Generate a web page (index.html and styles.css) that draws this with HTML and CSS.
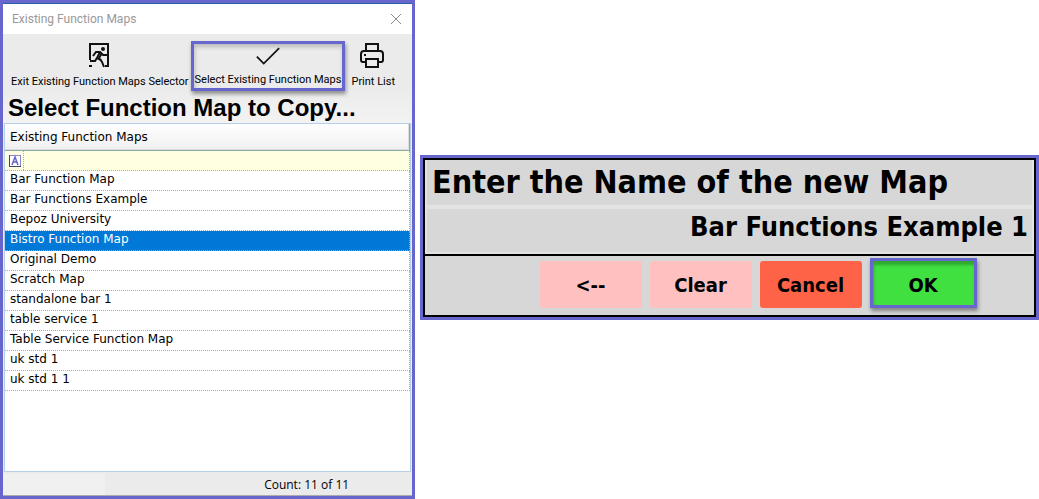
FILE: index.html
```html
<!DOCTYPE html>
<html lang="en">
<head>
    <meta charset="UTF-8">
    <meta name="viewport" content="width=device-width, initial-scale=1.0">
    <title>Existing Function Maps</title>
    <link rel="stylesheet" href="styles.css">
</head>
<body>
    <!-- Map Selector Window -->
    <section class="selector">
        <header class="title-bar">
            <span>Existing Function Maps</span>
            <button class="close-btn" type="button" aria-label="Close">
                <svg width="12" height="12" viewBox="0 0 12 12"><path d="M1 1L11 11M11 1L1 11" stroke="#8a8a8a" fill="none"/></svg>
            </button>
        </header>

        <div class="top-area">
            <div class="toolbar">
                <button class="tool-btn" type="button">
                    <svg width="28" height="28" viewBox="0 0 28 28" fill="none" stroke="#111" stroke-width="2">
                        <path d="M4 19V3H22V25H19"/>
                        <path d="M3 25H6"/>
                        <circle cx="17" cy="8" r="2" fill="#111" stroke="none"/>
                        <path d="M7 15L10 11H14L17 14H21"/>
                        <path d="M14 11L11 17L15 19"/>
                        <path d="M16 12L13 17"/>
                        <path d="M14 18L16 21L18 26"/>
                        <path d="M11 17L9 20H4"/>
                    </svg>
                    <span>Exit Existing Function Maps Selector</span>
                </button>
                <button class="tool-btn marked" type="button">
                    <svg width="28" height="28" viewBox="0 0 28 28" fill="none" stroke="#111" stroke-width="2">
                        <path d="M1 16L9 24L27 6"/>
                    </svg>
                    <span>Select Existing Function Maps</span>
                </button>
                <button class="tool-btn" type="button">
                    <svg width="28" height="28" viewBox="0 0 28 28" fill="none" stroke="#111" stroke-width="2">
                        <path d="M7 10V3H19V10"/>
                        <path d="M6 21H4Q2 21 2 19V13Q2 10 5 10H21Q24 10 24 13V19Q24 21 22 21H20"/>
                        <path d="M7 18H19V26H7Z"/>
                        <path d="M5 14H7"/>
                    </svg>
                    <span>Print List</span>
                </button>
            </div>
            <h1>Select Function Map to Copy...</h1>
        </div>

        <div class="list-area">
            <table class="map-table">
                <thead>
                    <tr><th scope="col">Existing Function Maps</th></tr>
                </thead>
                <tbody>
                    <tr class="filter-row">
                        <td>
                            <div class="filter">
                                <label for="filter">
                                    <svg width="12" height="12" viewBox="0 0 12 12" fill="none">
                                        <rect x="0.5" y="0.5" width="11" height="11" fill="#fff" stroke="#8888cc"/>
                                        <path d="M0.5 0V11.5H12" stroke="#444477"/>
                                        <path d="M3 10L6 2L9 10M4 7H8" stroke="#6666cc" stroke-width="1.5"/>
                                    </svg>
                                </label>
                                <input type="text" id="filter" aria-label="Filter maps">
                            </div>
                        </td>
                    </tr>
                    <tr><td>Bar Function Map</td></tr>
                    <tr><td>Bar Functions Example</td></tr>
                    <tr><td>Bepoz University</td></tr>
                    <tr class="selected"><td>Bistro Function Map</td></tr>
                    <tr><td>Original Demo</td></tr>
                    <tr><td>Scratch Map</td></tr>
                    <tr><td>standalone bar 1</td></tr>
                    <tr><td>table service 1</td></tr>
                    <tr><td>Table Service Function Map</td></tr>
                    <tr><td>uk std 1</td></tr>
                    <tr><td>uk std 1 1</td></tr>
                </tbody>
            </table>
        </div>

        <footer class="status-bar">
            <div class="status-block"></div>
            <div class="count">Count: 11 of 11</div>
        </footer>
    </section>

    <!-- Name Entry Dialog -->
    <form class="dialog">
        <div class="entry">
            <label for="mapName">Enter the Name of the new Map</label>
            <input type="text" id="mapName" value="Bar Functions Example 1">
        </div>
        <div class="actions">
            <button class="btn" type="button">&lt;--</button>
            <button class="btn" type="reset">Clear</button>
            <button class="btn cancel" type="button">Cancel</button>
            <button class="btn ok" type="button">OK</button>
        </div>
    </form>
</body>
</html>
```
FILE: styles.css
```css
/* General Reset */
* {
    box-sizing: border-box;
    margin: 0;
    padding: 0;
}
body {
    display: grid;
    grid-template-columns: minmax(0, 415fr) minmax(0, 619fr);
    gap: 5px;
    min-height: 100vh;
    background: #fff;
    color: #000;
    font-family: "DejaVu Sans", sans-serif;
}
button {
    border: none;
    background: none;
    color: inherit;
    cursor: pointer;
}
svg {
    display: block;
}

/* Selector Window */
.selector {
    display: flex;
    flex-direction: column;
    border: 3px solid #6666cc;
    background: #ebebeb;
}
.title-bar {
    display: flex;
    justify-content: space-between;
    align-items: center;
    height: 31px;
    padding: 0 10px 0 9px;
    border-top: 1px solid #2a5fa5;
    background: #fff;
    color: #999;
    font: 12px Roboto, sans-serif;
}
.top-area {
    height: 89px;
    padding: 7px 4px 0 5px;
    background: linear-gradient(#ebebeb 60%, #f3f3f3);
}
.toolbar {
    display: flex;
}
.tool-btn {
    display: flex;
    flex-direction: column;
    align-items: center;
    height: 50px;
    padding: 0 2px 0 3px;
    font: 11px/16px Roboto, sans-serif;
    white-space: nowrap;
}
.tool-btn span {
    margin-top: 5px;
}
.tool-btn.marked {
    padding: 0 1px;
    border: 3px solid #6666cc;
    box-shadow: 1px 3px 4px rgba(0, 0, 0, 0.4), inset 1px 3px 4px rgba(0, 0, 0, 0.2);
}
.tool-btn.marked svg {
    margin-top: -1px;
}
.tool-btn:last-child {
    padding: 0 6px;
}
h1 {
    font: bold 24px/34px "Liberation Sans", sans-serif;
    white-space: nowrap;
}

/* Map List */
.list-area {
    flex: 1;
    margin: 0 1px;
    border: 1px solid #b5cfe7;
    background: #fff;
}
.map-table {
    width: 100%;
    border-collapse: separate;
    border-spacing: 0;
    font-size: 12px;
    line-height: 16px;
}
.map-table th {
    height: 27px;
    padding: 0 5px;
    border-right: 1px solid #88aaaa;
    border-bottom: 1px solid #88aaaa;
    background: linear-gradient(#fff, #f0f0f0);
    box-shadow: inset -1px -1px #ddd;
    font-weight: normal;
    text-align: left;
}
.map-table td {
    height: 20px;
    padding: 0 5px 3px;
    border-right: 1px dotted #aaa;
    border-bottom: 1px dotted #aaa;
}
.map-table .filter-row td {
    padding: 0;
    background: #ffffe1;
}
.map-table .selected td {
    background: #0078d7;
    color: #fff;
}
.filter {
    display: flex;
    height: 19px;
}
.filter label {
    display: flex;
    align-items: center;
    padding: 0 2px 0 4px;
    border-right: 1px dotted #aaa;
}
.filter input {
    flex: 1;
    min-width: 0;
    border: none;
    outline: none;
    background: transparent;
}

/* Status Bar */
.status-bar {
    display: grid;
    grid-template-columns: 1fr 3fr;
    grid-template-rows: 100%;
    height: 24px;
    border-bottom: 1px solid #aaa;
    font: 12px/26px "Open Sans", sans-serif;
}
.status-block {
    margin-top: 2px;
    background: #f0f0f0;
}
.count {
    padding-left: 96px;
    text-align: center;
}

/* Name Entry Dialog */
.dialog {
    align-self: start;
    margin-top: 155px;
    border: 3px solid #6666cc;
    outline: 2px solid #000;
    outline-offset: -5px;
    padding: 2px;
    background: #d7d7d7;
    font-family: "DejaVu Sans Condensed", "DejaVu Sans", sans-serif;
    font-weight: bold;
}
.entry {
    display: flex;
    flex-direction: column;
    gap: 4px;
    padding: 0 2px 2px;
    border-bottom: 2px solid #000;
    background: #e3e3e3;
}
.entry label {
    height: 45px;
    padding: 0 5px;
    background: #d7d7d7;
    font-size: 32px;
    line-height: 45px;
}
.entry input {
    width: 100%;
    height: 43px;
    padding: 0 4px 8px;
    border: none;
    outline: none;
    background: #d7d7d7;
    font: inherit;
    font-size: 27px;
    text-align: right;
}
.actions {
    display: flex;
    justify-content: center;
    align-items: flex-end;
    gap: 8px;
    height: 59px;
    padding: 0 0 7px 57px;
}
.btn {
    width: 102px;
    height: 47px;
    border-radius: 3px;
    background: #ffc0c0;
    font: inherit;
    font-size: 20px;
}
.btn.cancel {
    background: #ff6347;
}
.btn.ok {
    width: 107px;
    height: 50px;
    padding-top: 3px;
    border: 3px solid #6666cc;
    border-radius: 0;
    background: #40e040;
    box-shadow: 1px 3px 4px rgba(0, 0, 0, 0.4), inset 1px 4px 3px rgba(0, 0, 0, 0.25);
}
```
